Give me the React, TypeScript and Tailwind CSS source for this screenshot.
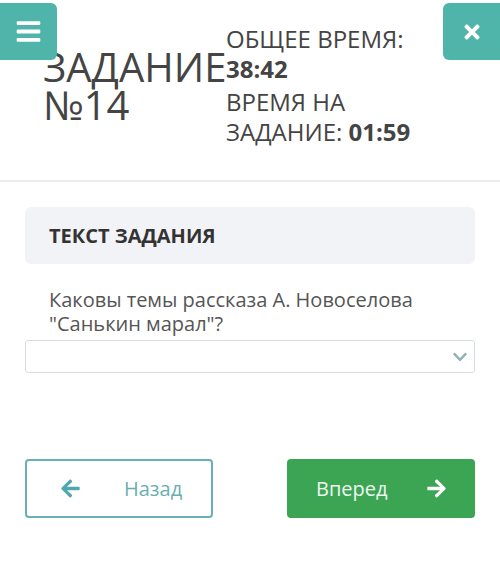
import { FaBars, FaTimes, FaArrowLeft, FaArrowRight, FaChevronDown } from "react-icons/fa";

// Экран задания: шапка с таймерами, текст вопроса, выбор ответа и навигация.
export default function App() {
  return (
    <div
      className="relative min-h-[571px] w-[500px] bg-white text-[#444]"
      style={{ fontFamily: '"Open Sans", "Noto Sans", sans-serif' }}
    >
      <button className="absolute left-0 top-[3px] flex h-[57px] w-[57px] items-center justify-center rounded-r-md bg-[#4fb5ab] text-white">
        <FaBars size={27} />
      </button>
      <button className="absolute left-[443px] top-[3px] flex h-[57px] w-[57px] items-center justify-center rounded-l-md bg-[#4fb5ab] text-white">
        <FaTimes size={22} />
      </button>

      <header className="flex h-[182px] border-b-2 border-[#ececec]">
        <h1 className="box-content w-[183px] shrink-0 pl-[43px] pt-[48px] text-[40px] leading-[38px] font-normal text-[#444]">
          ЗАДАНИЕ
          <br />
          №14
        </h1>
        <div className="pt-[24px] text-[24px] leading-[30px] text-[#444]">
          <p>
            ОБЩЕЕ ВРЕМЯ:
            <br />
            <b>38:42</b>
          </p>
          <p className="mt-[3px]">
            ВРЕМЯ НА
            <br />
            ЗАДАНИЕ: <b>01:59</b>
          </p>
        </div>
      </header>

      <main className="px-[25px] pt-[25px]">
        <div className="flex h-[57px] items-center rounded-md bg-[#f2f3f7] px-[24px]">
          <span className="text-[20px] font-bold text-[#333]">ТЕКСТ ЗАДАНИЯ</span>
        </div>

        <p className="mt-[24px] px-[24px] text-[20px] leading-[24px] text-[#555]">
          Каковы темы рассказа А. Новоселова
          <br />
          "Санькин марал"?
        </p>

        <div className="mt-[4px] flex h-[33px] items-center justify-end rounded-[3px] border border-[#d6dde0] bg-white pr-[6px]">
          <FaChevronDown size={16} className="text-[#8fb3b8]" />
        </div>

        <div className="mt-[86px] flex justify-between">
          <button className="flex h-[59px] w-[188px] items-center rounded-[4px] border-2 border-[#67b0b8] bg-white pl-[33px] text-[20px] text-[#6aaeb5]">
            <FaArrowLeft size={21} className="text-[#4fa8ae]" />
            <span className="ml-[43px]">Назад</span>
          </button>
          <button className="flex h-[59px] w-[188px] items-center rounded-[4px] bg-[#3ba554] pl-[29px] text-[20px] text-[#eef7ef]">
            <span>Вперед</span>
            <FaArrowRight size={21} className="ml-[38px] text-white" />
          </button>
        </div>
      </main>
    </div>
  );
}
